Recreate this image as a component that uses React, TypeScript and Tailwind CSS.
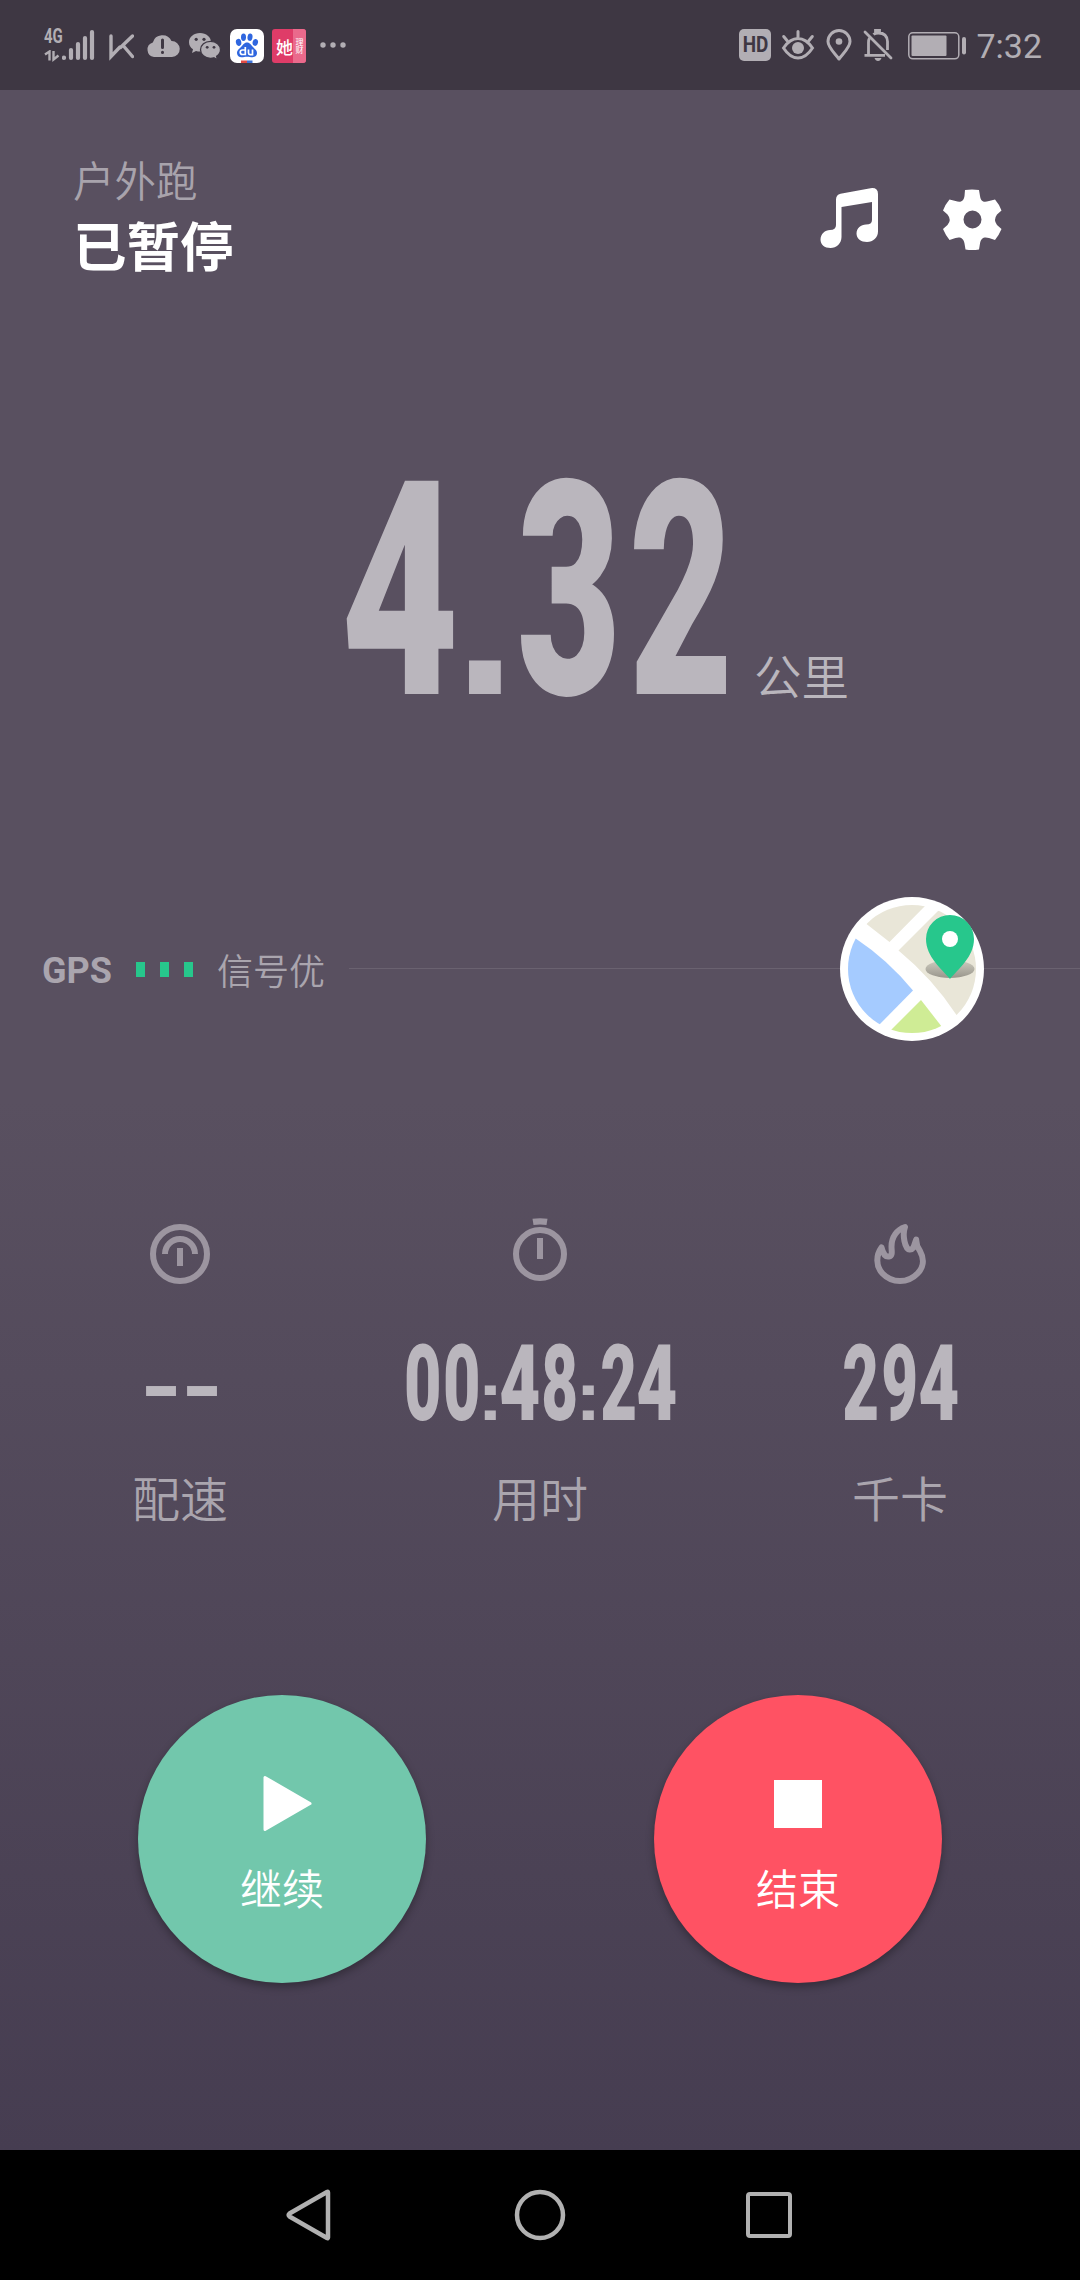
import React from "react";

type Glyph = { ch: string; cell: string; shape: string };

const cjk = "font-['Noto_Sans_CJK_SC',sans-serif]";

// Each character sits in a fixed cell and is narrowed to give condensed figures.
function Figures({ glyphs, className }: { glyphs: Glyph[]; className: string }) {
  return (
    <div className={`flex items-baseline font-['Roboto',sans-serif] text-[#bab6bd] ${className}`}>
      {glyphs.map((g, i) => (
        <span key={i} className={`flex shrink-0 justify-center ${g.cell}`}>
          <span className={`block ${g.shape}`}>{g.ch}</span>
        </span>
      ))}
    </div>
  );
}

const colon = "scale-x-[1.15] font-['Liberation_Sans',sans-serif] text-[68px] leading-[40px] font-bold";
const dash = "scale-x-[1.4] font-['Liberation_Sans',sans-serif] text-[84px] leading-[80px] font-bold";

const distance: Glyph[] = [
  { ch: "4", cell: "w-[108px]", shape: "scale-x-[0.68]" },
  { ch: ".", cell: "ml-[15px] w-[32px]", shape: "font-['Liberation_Sans',sans-serif] text-[225px] leading-none font-bold" },
  { ch: "3", cell: "ml-[22px] w-[91px]", shape: "scale-x-[0.6]" },
  { ch: "2", cell: "ml-[21px] w-[91px]", shape: "scale-x-[0.6]" },
];

const time: Glyph[] = [
  { ch: "0", cell: "w-8", shape: "scale-x-[0.61]" },
  { ch: "0", cell: "ml-[7px] w-8", shape: "scale-x-[0.61]" },
  { ch: ":", cell: "ml-[7px] w-[11px]", shape: colon },
  { ch: "4", cell: "ml-[6px] w-[37px]", shape: "scale-x-[0.67]" },
  { ch: "8", cell: "ml-[5px] w-8", shape: "scale-x-[0.6]" },
  { ch: ":", cell: "ml-[7px] w-[11px]", shape: colon },
  { ch: "2", cell: "ml-[9px] w-8", shape: "scale-x-[0.6]" },
  { ch: "4", cell: "ml-[4px] w-[37px]", shape: "scale-x-[0.67]" },
];

const kcal: Glyph[] = [
  { ch: "2", cell: "w-8", shape: "scale-x-[0.6]" },
  { ch: "9", cell: "ml-[7px] w-8", shape: "scale-x-[0.6]" },
  { ch: "4", cell: "ml-[4px] w-[37px]", shape: "scale-x-[0.67]" },
];

const pace: Glyph[] = [
  { ch: "-", cell: "w-8", shape: dash },
  { ch: "-", cell: "ml-[9px] w-8", shape: dash },
];

function StatusBar() {
  return (
    <header className="flex h-[90px] shrink-0 items-start bg-[#3e3743] pt-[29px] text-[#b2aeb4]">
      <div className="ml-[44px] flex h-[34px] w-[52px] items-start">
        <div className="flex w-[18px] flex-col">
          <span className="block origin-left scale-x-[0.75] font-['Roboto',sans-serif] text-[20px] leading-[15px] font-bold">4G</span>
          <svg viewBox="0 0 18 12" className="mt-[6px] h-3 w-[18px]" fill="none" stroke="currentColor" strokeWidth="2.4">
            <path d="M1 4.500 5.500 1.500V10.500M9.500 1V9.500L14.500 5.500" />
          </svg>
        </div>
        <svg viewBox="0 0 34 34" className="h-[34px] w-[34px]" stroke="currentColor" strokeWidth="4.200" strokeLinecap="round">
          <path d="M2 28.500v.5M9 21v8M16 15v14M23 9v20M30 3v26" />
        </svg>
      </div>
      <svg viewBox="0 0 26 34" className="ml-[12px] h-[34px] w-[26px]" fill="none" stroke="currentColor" strokeWidth="3.400" strokeLinecap="round">
        <path d="M3 7v20.500L12 18M24.500 7 12.500 18.500M16 17.500 24.500 27.500" />
      </svg>
      <svg viewBox="0 0 34 34" className="ml-[12px] h-[34px] w-[34px]">
        <path fill="currentColor" d="M8 28a7.500 7.500 0 0 1-1.200-14.600A10 10 0 0 1 25.500 12 8 8 0 0 1 26 28z" />
        <path stroke="#3e3743" strokeWidth="3" strokeLinecap="round" d="M16.500 11v7.500M16.500 23.300v.2" />
      </svg>
      <svg viewBox="0 0 34 34" className="ml-[8px] h-[34px] w-[34px]">
        <path fill="currentColor" d="M12 4C5.800 4 1 8 1 13.200c0 3 1.600 5.400 4 7L4 24l4-2.100c1.300.4 2.600.6 4 .6C18.200 22.500 23 18.400 23 13.200S18.200 4 12 4z" />
        <path fill="currentColor" stroke="#3e3743" strokeWidth="1.300" d="M22.500 12.300c-5.600 0-10 3.800-10 8.500s4.400 8.500 10 8.500c1.200 0 2.400-.2 3.400-.5l3.600 1.900-.9-3.300c2.400-1.600 3.900-4 3.900-6.600 0-4.700-4.400-8.500-10-8.500z" />
        <g fill="#3e3743">
          <circle cx="8.200" cy="10.300" r="1.600" /><circle cx="16" cy="10.300" r="1.600" />
          <circle cx="19.200" cy="18.300" r="1.400" /><circle cx="26" cy="18.300" r="1.400" />
        </g>
      </svg>
      <svg viewBox="0 0 34 34" className="ml-[8px] h-[34px] w-[34px]">
        <rect width="34" height="34" rx="7" fill="#fff" />
        <g fill="#2f66df">
          <ellipse cx="8.600" cy="13.400" rx="2.700" ry="3.600" transform="rotate(-12 8.600 13.400)" />
          <ellipse cx="13.500" cy="8.200" rx="2.500" ry="3.700" />
          <ellipse cx="20" cy="8.200" rx="2.500" ry="3.700" transform="rotate(8 20 8.200)" />
          <ellipse cx="25.300" cy="13.400" rx="2.700" ry="3.500" transform="rotate(12 25.300 13.400)" />
          <path d="M17 13.500c-3 0-4 2.500-6 4.500-2.300 2.200-4.300 3.700-4 6.200.3 2.600 2 4 4.500 4 2 0 3.400-.5 5.500-.5s3.500.5 5.500.5c2.500 0 4.300-1.400 4.500-4 .2-2.500-2-4-4-6.200-2-2-3-4.500-6-4.500z" />
        </g>
        <path fill="none" stroke="#fff" strokeWidth="1.700" d="M15.300 18v7.500h-2.800a2.200 2.200 0 1 1 0-4.500h2.800M18.500 20.500V24q0 1.600 1.500 1.600h2.500V20.500" />
        <path fill="#e24b44" d="M11 31.500h6V34h-6z" /><path fill="#3f73d8" d="M17 31.500h5.500V34H17z" />
      </svg>
      <div className={`ml-[8px] flex h-[34px] w-[34px] overflow-hidden rounded-[3px] bg-[#df3c68] text-white ${cjk}`}>
        <div className="flex w-[21px] items-center justify-end text-[17px] leading-none font-medium">她</div>
        <div className="flex w-[13px] flex-col items-center justify-center bg-[#ea6a8c] text-[8px] leading-[8px]">
          <span>理</span><span>财</span>
        </div>
      </div>
      <svg viewBox="0 0 26 34" className="ml-[14px] h-[34px] w-[26px]" fill="currentColor">
        <circle cx="3" cy="16" r="2.700" /><circle cx="13" cy="16" r="2.700" /><circle cx="23" cy="16" r="2.700" />
      </svg>

      <div className="ml-auto flex h-8 w-8 items-center justify-center rounded-[5px] bg-[#b2aeb4]">
        <span className="scale-x-[0.88] font-['Roboto',sans-serif] text-[21.500px] leading-none font-bold text-[#3e3743]">HD</span>
      </div>
      <svg viewBox="0 0 34 32" className="ml-[10px] h-8 w-[34px]" fill="none" stroke="currentColor" strokeWidth="3" strokeLinecap="round">
        <path d="M2.500 19Q9 9.500 17 9.500T31.500 19Q25 29 17 29T2.500 19zM17 2.500V8M2.700 7.500l3.500 4.200M31.300 7.500l-3.500 4.200" />
        <circle cx="17" cy="19" r="6" fill="currentColor" stroke="none" />
      </svg>
      <svg viewBox="0 0 26 32" className="ml-[11px] h-8 w-[26px]" fill="none" stroke="currentColor" strokeWidth="3">
        <path strokeLinejoin="round" d="M13 30C9 24.500 2 18.500 2 12.500a11 11 0 0 1 22 0C24 18.500 17 24.500 13 30z" />
        <circle cx="13" cy="12.500" r="3.300" fill="currentColor" stroke="none" />
      </svg>
      <svg viewBox="0 0 30 32" className="ml-[11px] h-8 w-[30px]" fill="none" stroke="currentColor" strokeWidth="2.800">
        <path strokeLinecap="round" d="M2 3 28 29" />
        <path d="M1.500 26.300H22M5.500 26V13.500q0-2.500 1-4.500M10.500 5.500Q12 4 15.500 4q8.500 0 9 8.500V21M12.500 4V1.500h4V4" />
        <path fill="currentColor" stroke="none" d="M11.500 29h7q-1 3-3.500 3t-3.500-3z" />
      </svg>
      <svg viewBox="0 0 58 32" className="ml-[15px] h-8 w-[58px]">
        <rect x=".8" y="3.800" width="50" height="26" rx="4" fill="none" stroke="currentColor" strokeWidth="1.500" />
        <rect x="3.500" y="6.500" width="35" height="20.500" rx="1" fill="currentColor" />
        <rect x="54" y="8" width="4" height="17.500" rx="2" fill="currentColor" />
      </svg>
      <span className="mr-[38px] ml-[10px] font-['Roboto',sans-serif] text-[34px] leading-[34px]">7:32</span>
    </header>
  );
}

function MapButton() {
  return (
    <svg viewBox="0 0 144 144" className="h-36 w-36 shrink-0">
      <defs>
        <clipPath id="disc"><circle cx="72" cy="72" r="64" /></clipPath>
        <clipPath id="outer"><circle cx="72" cy="72" r="72" /></clipPath>
        <linearGradient id="shade" x1="0" y1="0" x2="0" y2="1">
          <stop offset="0" stopColor="#cfccc0" /><stop offset="1" stopColor="#99968c" />
        </linearGradient>
      </defs>
      <circle cx="72" cy="72" r="72" fill="#fff" />
      <g clipPath="url(#disc)">
        <path fill="#e9e6d8" d="M26.500 27 49.500 45 86 8V0H20zM58.500 53.500 98 14 144 0V144L116.500 118Q93 82 58.500 53.500z" />
        <path fill="#a5cbff" d="M15 41Q48 63 73 93.500L39 128 0 130V41z" />
        <path fill="#cfec95" d="M81 103 102 130 98 144H46L51 133z" />
      </g>
      <g clipPath="url(#outer)">
        <ellipse cx="110" cy="72" rx="24.500" ry="9" fill="url(#shade)" />
      </g>
      <path fill="#27c78c" d="M110 82C102 72 86 60 86 42a24 24 0 0 1 48 0C134 60 118 72 110 82z" />
      <circle cx="110" cy="42" r="8" fill="#fff" />
    </svg>
  );
}

function Stat({ icon, children, label }: { icon: React.ReactNode; children: React.ReactNode; label: string }) {
  return (
    <div className="flex w-[360px] flex-col items-center">
      <div className="h-[72px] text-[#9c95a0]">{icon}</div>
      <div className="mt-[54px] flex h-[80px] items-center pl-[2px]">{children}</div>
      <div className={`mt-[36px] h-[72px] text-[48px] leading-[72px] font-[350] text-[#aaa5ae] ${cjk}`}>{label}</div>
    </div>
  );
}

function RoundButton({ tone, icon, label }: { tone: string; icon: React.ReactNode; label: string }) {
  return (
    <button className={`flex h-72 w-72 flex-col items-center rounded-full pt-[78px] text-white shadow-[0_4px_8px_rgba(0,0,0,0.3)] ${tone}`}>
      {icon}
      <span className={`mt-[24px] text-[42px] leading-[60px] font-[350] ${cjk}`}>{label}</span>
    </button>
  );
}

export default function App() {
  return (
    <div className="flex h-[2280px] w-[1080px] flex-col overflow-hidden bg-[#463d51]">
      <StatusBar />
      <main className="flex h-[2060px] flex-col bg-[linear-gradient(180deg,#595060_0%,#595060_49%,#463d51_100%)]">
        <div className="flex h-[220px] items-start justify-between pr-[78px] pl-[73px]">
          <div className={`flex flex-col ${cjk}`}>
            <span className="mt-[65px] text-[41.500px] leading-[48px] font-[350] text-[#a8a3ac]">户外跑</span>
            <span className="mt-[10px] text-[53.500px] leading-[62px] font-bold text-white">已暂停</span>
          </div>
          <div className="mt-[97px] flex text-white">
            <svg viewBox="0 0 60 64" className="h-16 w-[60px]" fill="currentColor">
              <path d="M16 12.500Q16 7.700 20.500 6.700L50.500 1.200Q58 .3 58 7V44.500C58 50.500 53 55 47 55S36.500 51.500 36.500 46.500C36.500 41 41 37.500 46 37.500Q52 37.500 52 33V15L21.500 20V50C21.500 56.500 16.500 61 10.500 61S.5 57.500.5 52.500C.5 47 5 43 10 43Q16 43 16 38z" />
            </svg>
            <svg viewBox="0 0 60 64" className="ml-[62px] h-16 w-[60px]" fill="currentColor">
              <path fillRule="evenodd" d="M23 3Q30 2 37 3L38 9C39 15 42 15.500 47 14L53 12.500Q57 17 59.500 23.500L55 27.500Q51 33 55 38L59.500 42Q57 48 53 53L47 51C42 49.500 39 51 38 56.500L37 62.500Q30 63.500 23.500 62.500L22.500 56.500C21.500 51 18 49.500 13.500 51L7.500 53Q3.500 48 1 42L5.500 38Q10 33 5.500 27.500L1 23.500Q3.500 17 7.500 12.500L13.500 14C18 15.500 21.500 15 22.500 9zM30.500 23.500a9 9 0 1 0 0 18 9 9 0 0 0 0-18z" />
            </svg>
          </div>
        </div>

        <div className="flex h-[587px] items-start pt-[150px] pl-[346px]">
          <Figures glyphs={distance} className="h-[264px] text-[300px] leading-[264px] font-black" />
          <span className={`mt-[180px] ml-[28px] text-[47.500px] leading-[70px] font-[350] text-[#bab6bd] ${cjk}`}>公里</span>
        </div>

        <div className="flex h-36 items-center">
          <span className="mt-[3px] ml-[42px] w-[94px] font-['Roboto',sans-serif] text-[36px] leading-[44px] font-bold text-[#aaa5ae]">GPS</span>
          <div className="flex gap-[15px]">
            <i className="h-[15px] w-[9px] bg-[#27c78c]" />
            <i className="h-[15px] w-[9px] bg-[#27c78c]" />
            <i className="h-[15px] w-[9px] bg-[#27c78c]" />
          </div>
          <span className={`ml-[24px] w-[132px] text-[36px] leading-[54px] font-[350] text-[#aaa5ae] ${cjk}`}>信号优</span>
          <div className="mb-[2px] h-px flex-1 bg-[#6a6270]" />
          <MapButton />
          <div className="mb-[2px] h-px w-24 bg-[#6a6270]" />
        </div>

        <div className="mt-[177px] flex">
          <Stat
            label="配速"
            icon={
              <svg viewBox="0 0 72 72" className="h-[72px] w-[72px]" fill="none" stroke="currentColor" strokeWidth="6">
                <circle cx="36" cy="36" r="27" /><path d="M21 36a15 15 0 0 1 30 0M36 30v18" />
              </svg>
            }
          >
            <Figures glyphs={pace} className="text-[84px] leading-[80px] font-bold" />
          </Stat>
          <Stat
            label="用时"
            icon={
              <svg viewBox="0 0 72 72" className="h-[72px] w-[72px]" fill="none" stroke="currentColor" strokeWidth="6">
                <circle cx="36" cy="36" r="24" /><path d="M36 20v21" />
                <path fill="currentColor" stroke="none" d="M28.500.8Q36-.5 43.500.8L42.500 7Q36 6 29.500 7z" />
              </svg>
            }
          >
            <Figures glyphs={time} className="text-[106px] leading-[80px] font-black" />
          </Stat>
          <Stat
            label="千卡"
            icon={
              <svg viewBox="0 0 72 72" className="h-[72px] w-[72px]" fill="none" stroke="currentColor" strokeWidth="6" strokeLinejoin="round">
                <path d="M17.500 29.500C19 36 22 39 25 38.500 29 38 27.500 33 27.500 28.500 27.500 19 33 11.500 41 9 38 17 41 31 45.500 31.500 50 32 50 27 52.200 21.500 52 27 54 30 56 33 61 42 59 50 53.500 55.500 44 65.500 28 65.500 18.500 55.500 11.500 48 12 37 17.500 29.500Z" />
              </svg>
            }
          >
            <Figures glyphs={kcal} className="text-[106px] leading-[80px] font-black" />
          </Stat>
        </div>

        <div className="mt-[163px] flex gap-[228px] pl-[138px]">
          <RoundButton
            tone="bg-[#72c7ac]"
            label="继续"
            icon={
              <svg viewBox="0 0 60 60" className="h-[60px] w-[60px]" fill="#fff" stroke="#fff" strokeWidth="3" strokeLinejoin="round">
                <path d="M13 4.500v52L58 30.500z" />
              </svg>
            }
          />
          <RoundButton tone="bg-[#ff5263]" label="结束" icon={<div className="mt-[7px] mb-[5px] h-12 w-12 bg-white" />} />
        </div>
      </main>
      <nav className="flex h-[130px] items-center bg-black pl-[285px] text-[#b1b1b1]">
        <svg viewBox="0 0 48 56" className="h-14 w-12" fill="none" stroke="currentColor" strokeWidth="4.500" strokeLinejoin="round">
          <path d="M43 5.500v45q0 1-1 .5L4.500 29.500q-1.500-1.500 0-3L42 5q1-.5 1 .5z" />
        </svg>
        <svg viewBox="0 0 52 52" className="ml-[181px] h-[52px] w-[52px]" fill="none" stroke="currentColor" strokeWidth="4.500">
          <circle cx="26" cy="26" r="23" />
        </svg>
        <div className="ml-[180px] h-[46px] w-[46px] rounded-[4px] border-4 border-[#b1b1b1]" />
      </nav>
    </div>
  );
}
